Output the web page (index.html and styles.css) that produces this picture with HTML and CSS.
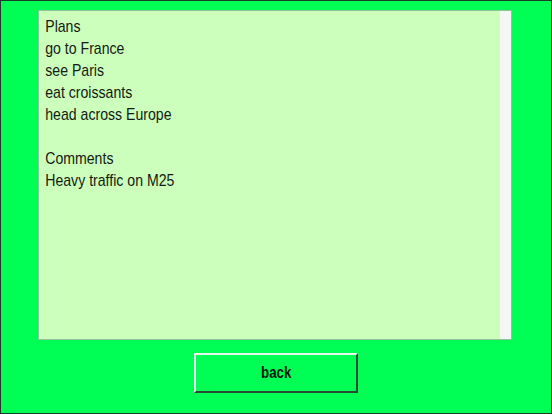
FILE: index.html
```html
<!DOCTYPE html>
<html>
<head>
<meta charset="utf-8">
<link rel="stylesheet" href="styles.css">
</head>
<body>
<div class="screen">
  <div class="notes">
    <div class="notes-text">
      <div class="line">Plans</div>
      <div class="line">go to France</div>
      <div class="line">see Paris</div>
      <div class="line">eat croissants</div>
      <div class="line">head across Europe</div>
      <div class="line">&nbsp;</div>
      <div class="line">Comments</div>
      <div class="line">Heavy traffic on M25</div>
    </div>
    <div class="track"></div>
  </div>
  <div class="actions">
    <button class="back-btn"><span class="label">back</span></button>
  </div>
</div>
</body>
</html>
```
FILE: styles.css
```css
html, body {
  margin: 0;
  padding: 0;
}
body {
  width: 552px;
  height: 414px;
  overflow: hidden;
  background: #00ff55;
}
.screen {
  box-sizing: border-box;
  width: 552px;
  height: 414px;
  border: 1px solid #1c3a26;
  background: #00ff55;
  padding: 9px 0 0 37px;
  display: flex;
  flex-direction: column;
}
.notes {
  box-sizing: border-box;
  width: 474px;
  height: 330px;
  border: 1px solid #8fc49a;
  background: #ccffbb;
  display: flex;
}
.notes-text {
  flex: 1;
  padding: 5px 0 0 7.5px;
  font-family: "Liberation Sans", Arial, sans-serif;
  font-size: 17px;
  line-height: 22px;
  color: #141a14;
  transform: scaleX(0.83);
  transform-origin: left top;
}
.track {
  width: 11px;
  background: #f4f7f4;
}
.actions {
  display: flex;
  justify-content: center;
  padding-top: 13px;
  padding-right: 37px;
}
.back-btn {
  box-sizing: border-box;
  width: 164px;
  height: 40px;
  background: #00ff55;
  border: 2px solid;
  border-color: #e8f5ea #2a4a33 #2a4a33 #e8f5ea;
  font-family: "Liberation Sans", Arial, sans-serif;
  font-weight: bold;
  font-size: 16px;
  color: #0c1a0c;
  padding: 0 0 1px 0;
}
.label {
  display: inline-block;
  transform: scaleX(0.83);
}
```
